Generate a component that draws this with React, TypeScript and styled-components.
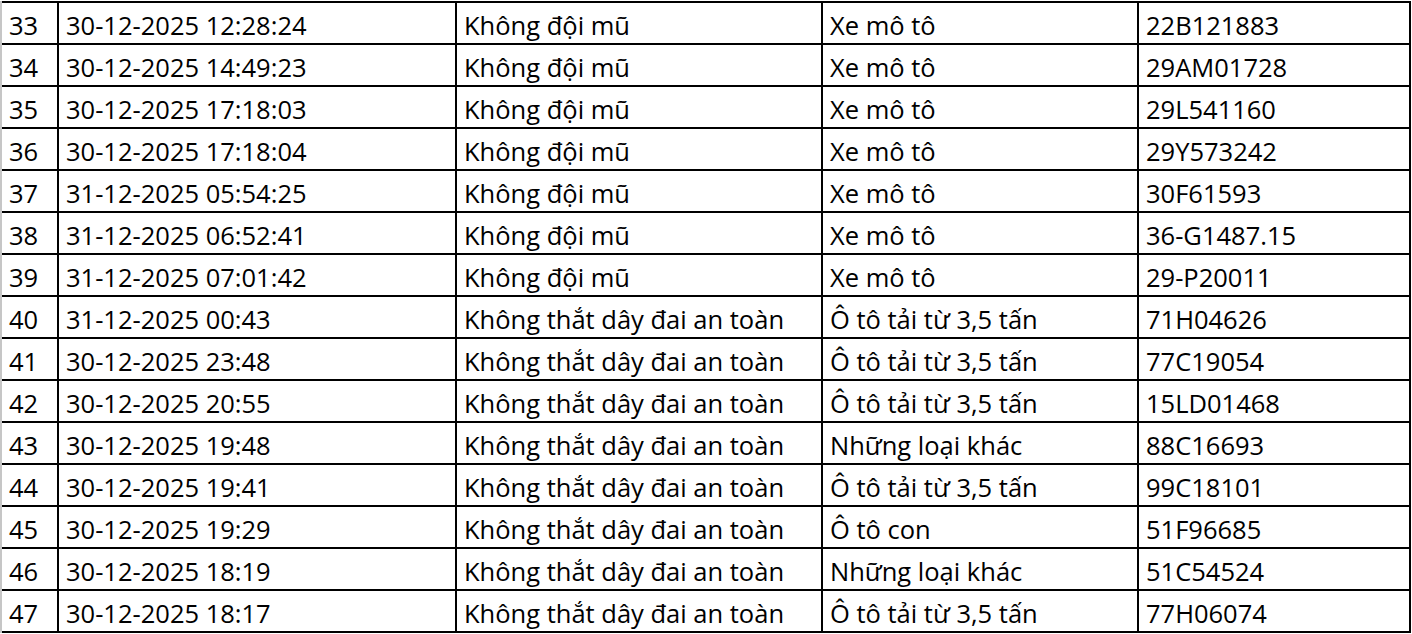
import React from 'react';
import styled, { createGlobalStyle } from 'styled-components';

const GlobalStyle = createGlobalStyle`
  html, body {
    margin: 0;
    padding: 0;
    background: #ffffff;
  }
  body {
    font-family: "Open Sans", "Noto Sans", sans-serif;
  }
`;

const Sheet = styled.div`
  padding-top: 1px;
  width: 1412px;
`;

const Grid = styled.div`
  display: grid;
  grid-template-columns: 55px 396px 364px 314px 270px;
  grid-auto-rows: 40px;
  gap: 2px;
  width: max-content;
  padding: 2px 2px 2px 0;
  background: #000000;
  border-left: 2px solid #c6c6c6;
`;

const Cell = styled.div`
  background: #ffffff;
  color: #000000;
  font-size: 25.5px;
  line-height: 40px;
  padding: 2px 0 0 7px;
  box-sizing: border-box;
  white-space: nowrap;
  overflow: hidden;
`;

type Row = [string, string, string, string, string];

const rows: Row[] = [
  ['33', '30-12-2025 12:28:24', 'Không đội mũ', 'Xe mô tô', '22B121883'],
  ['34', '30-12-2025 14:49:23', 'Không đội mũ', 'Xe mô tô', '29AM01728'],
  ['35', '30-12-2025 17:18:03', 'Không đội mũ', 'Xe mô tô', '29L541160'],
  ['36', '30-12-2025 17:18:04', 'Không đội mũ', 'Xe mô tô', '29Y573242'],
  ['37', '31-12-2025 05:54:25', 'Không đội mũ', 'Xe mô tô', '30F61593'],
  ['38', '31-12-2025 06:52:41', 'Không đội mũ', 'Xe mô tô', '36-G1487.15'],
  ['39', '31-12-2025 07:01:42', 'Không đội mũ', 'Xe mô tô', '29-P20011'],
  ['40', '31-12-2025 00:43', 'Không thắt dây đai an toàn', 'Ô tô tải từ 3,5 tấn', '71H04626'],
  ['41', '30-12-2025 23:48', 'Không thắt dây đai an toàn', 'Ô tô tải từ 3,5 tấn', '77C19054'],
  ['42', '30-12-2025 20:55', 'Không thắt dây đai an toàn', 'Ô tô tải từ 3,5 tấn', '15LD01468'],
  ['43', '30-12-2025 19:48', 'Không thắt dây đai an toàn', 'Những loại khác', '88C16693'],
  ['44', '30-12-2025 19:41', 'Không thắt dây đai an toàn', 'Ô tô tải từ 3,5 tấn', '99C18101'],
  ['45', '30-12-2025 19:29', 'Không thắt dây đai an toàn', 'Ô tô con', '51F96685'],
  ['46', '30-12-2025 18:19', 'Không thắt dây đai an toàn', 'Những loại khác', '51C54524'],
  ['47', '30-12-2025 18:17', 'Không thắt dây đai an toàn', 'Ô tô tải từ 3,5 tấn', '77H06074'],
];

export default function App() {
  return (
    <>
      <GlobalStyle />
      <Sheet>
        <Grid>
          {rows.map((row) =>
            row.map((value, i) => <Cell key={`${row[0]}-${i}`}>{value}</Cell>)
          )}
        </Grid>
      </Sheet>
    </>
  );
}
